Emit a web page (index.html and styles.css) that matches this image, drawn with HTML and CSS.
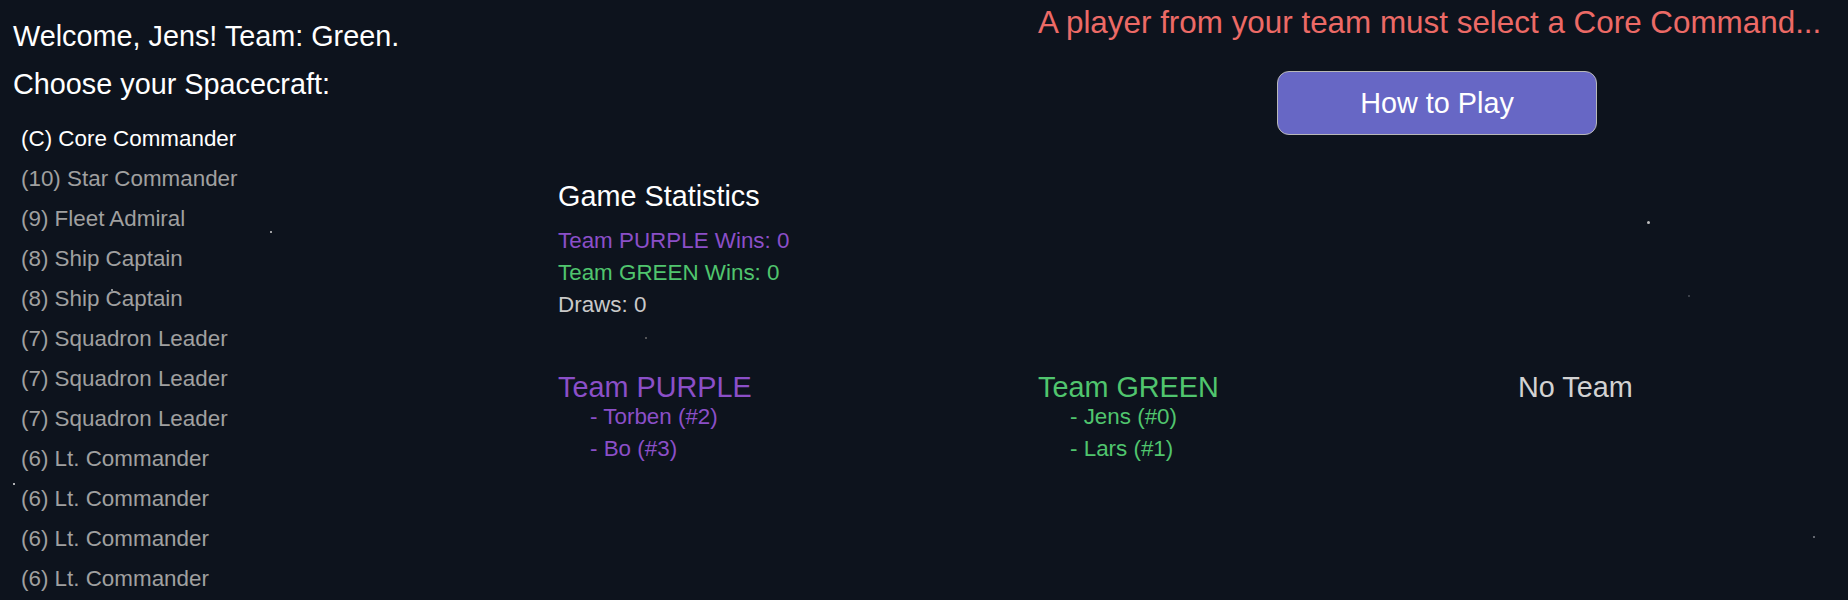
FILE: index.html
```html
<!DOCTYPE html>
<html lang="en">
<head>
<meta charset="utf-8">
<title>Spacecraft</title>
<link rel="stylesheet" href="styles.css">
</head>
<body>
<div class="stars">
  <span class="star s1"></span>
  <span class="star s2"></span>
  <span class="star s3"></span>
  <span class="star s4"></span>
  <span class="star s5"></span>
  <span class="star s6"></span>
  <span class="star s7"></span>
</div>
<div class="page">
  <aside class="sidebar">
    <div class="title">Welcome, Jens! Team: Green.</div>
    <div class="title">Choose your Spacecraft:</div>
    <ul class="crafts">
      <li class="craft selected">(C) Core Commander</li>
      <li class="craft">(10) Star Commander</li>
      <li class="craft">(9) Fleet Admiral</li>
      <li class="craft">(8) Ship Captain</li>
      <li class="craft">(8) Ship Captain</li>
      <li class="craft">(7) Squadron Leader</li>
      <li class="craft">(7) Squadron Leader</li>
      <li class="craft">(7) Squadron Leader</li>
      <li class="craft">(6) Lt. Commander</li>
      <li class="craft">(6) Lt. Commander</li>
      <li class="craft">(6) Lt. Commander</li>
      <li class="craft">(6) Lt. Commander</li>
    </ul>
  </aside>
  <main class="main">
    <section class="status">
      <div class="status-msg">A player from your team must select a Core Command...</div>
      <button class="help-btn">How to Play</button>
    </section>
    <section class="stats">
      <div class="stats-title">Game Statistics</div>
      <div class="stat purple">Team PURPLE Wins: 0</div>
      <div class="stat green">Team GREEN Wins: 0</div>
      <div class="stat neutral">Draws: 0</div>
    </section>
    <section class="team purple">
      <div class="team-name">Team PURPLE</div>
      <ul class="players">
        <li>- Torben (#2)</li>
        <li>- Bo (#3)</li>
      </ul>
    </section>
    <section class="team green">
      <div class="team-name">Team GREEN</div>
      <ul class="players">
        <li>- Jens (#0)</li>
        <li>- Lars (#1)</li>
      </ul>
    </section>
    <section class="team none">
      <div class="team-name">No Team</div>
      <ul class="players"></ul>
    </section>
  </main>
</div>
</body>
</html>
```

FILE: styles.css
```css
html, body {
  margin: 0;
  padding: 0;
  height: 100%;
  overflow: hidden;
}

body {
  background: #0d131d;
  color: #ffffff;
  font-family: "Liberation Sans", Arial, Helvetica, sans-serif;
  position: relative;
}

.stars {
  position: absolute;
  inset: 0;
  pointer-events: none;
}

.star {
  position: absolute;
  border-radius: 50%;
  background: #d8d8d8;
}

.s1 { left: 270px; top: 231px; width: 2px; height: 2px; background: #cfcfcf; }
.s2 { left: 645px; top: 337px; width: 2px; height: 2px; background: #6a6a6a; }
.s3 { left: 111px; top: 289px; width: 2px; height: 2px; background: #bdbdbd; }
.s4 { left: 13px; top: 483px; width: 2px; height: 2px; background: #e6e6e6; }
.s5 { left: 1647px; top: 221px; width: 3px; height: 3px; background: #bdbdbd; }
.s6 { left: 1688px; top: 295px; width: 2px; height: 2px; background: #4a4f57; }
.s7 { left: 1813px; top: 536px; width: 2px; height: 2px; background: #80858c; }

.page {
  display: flex;
  position: relative;
}

.sidebar {
  width: 545px;
  flex: none;
  box-sizing: border-box;
  padding: 12px 0 0 13px;
}

.title {
  font-size: 28.8px;
  line-height: 48px;
  color: #ffffff;
}

.crafts {
  list-style: none;
  margin: 11px 0 0 0;
  padding: 0 0 0 8px;
}

.craft {
  font-size: 22.4px;
  line-height: 40px;
  color: #a0a0a0;
}

.craft.selected {
  color: #ffffff;
}

.main {
  flex: 1;
  display: grid;
  grid-template-columns: 480px 480px 1fr;
  align-content: start;
  padding: 0 12px 0 13px;
}

.status {
  grid-column: 2 / 4;
  grid-row: 1;
  display: flex;
  flex-direction: column;
  align-items: center;
  padding-top: 3px;
}

.status-msg {
  align-self: flex-start;
  font-size: 31.4px;
  line-height: 40px;
  color: #ec6a66;
  white-space: nowrap;
}

.help-btn {
  margin-top: 28px;
  width: 320px;
  height: 64px;
  background: #6767c5;
  color: #ffffff;
  border: 1px solid #b8b8b8;
  border-radius: 12px;
  font-family: "Liberation Sans", Arial, Helvetica, sans-serif;
  font-size: 28.8px;
  padding: 0;
}

.stats {
  grid-column: 1;
  grid-row: 2;
  margin-top: 41px;
}

.stats-title {
  font-size: 28.8px;
  line-height: 40px;
  color: #ffffff;
}

.stat {
  font-size: 22.4px;
  line-height: 32px;
}

.stats-title + .stat {
  margin-top: 9px;
}

.purple { color: #8b4fc8; }
.green { color: #50c56e; }
.neutral { color: #c9c9c9; }
.none { color: #d2d2d2; }

.team {
  grid-row: 3;
  margin-top: 53px;
}

.team-name {
  font-size: 28.8px;
  line-height: 27px;
}

.players {
  list-style: none;
  margin: 0;
  padding: 0 0 0 32px;
}

.players li {
  font-size: 22.4px;
  line-height: 32px;
}
```
